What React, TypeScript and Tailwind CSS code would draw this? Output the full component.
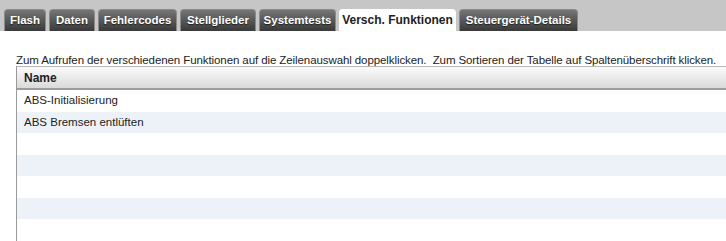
const tabs = [
  { label: 'Flash', w: 'w-[42px]' },
  { label: 'Daten', w: 'w-[46px]' },
  { label: 'Fehlercodes', w: 'w-[79px]' },
  { label: 'Stellglieder', w: 'w-[76px]' },
  { label: 'Systemtests', w: 'w-[77px]' },
  { label: 'Versch. Funktionen', w: 'w-[117px]', active: true },
  { label: 'Steuergerät-Details', w: 'w-[119px]' },
]

const rows = ['ABS-Initialisierung', 'ABS Bremsen entlüften', '', '', '', '', '']

export default function App() {
  return (
    <div className="w-[726px] h-[241px] overflow-hidden bg-white text-[#222] font-['Liberation_Sans',Arial,sans-serif]">
      {/* Tab bar */}
      <div className="h-[31px] bg-[#c6c6c6] flex items-end gap-[3px] pl-[4px]">
        {tabs.map((t) =>
          t.active ? (
            <div
              key={t.label}
              className={`${t.w} h-[22px] bg-white rounded-t-[4px] flex items-center justify-center text-[12px] font-bold text-[#222]`}
            >
              {t.label}
            </div>
          ) : (
            <div
              key={t.label}
              className={`${t.w} h-[22px] rounded-t-[4px] border-t border-x border-[#8a8a8a] bg-gradient-to-b from-[#767676] to-[#3a3a3a] flex items-center justify-center text-[11.5px] font-bold text-white [text-shadow:0_1px_1px_rgba(0,0,0,0.6)]`}
            >
              {t.label}
            </div>
          )
        )}
      </div>

      {/* Content */}
      <div className="pl-[16px] pt-[24px]">
        <p className="text-[11.5px] leading-[11px] h-[11px] tracking-[-0.09px] whitespace-nowrap">
          Zum Aufrufen der verschiedenen Funktionen auf die Zeilenauswahl doppelklicken.&nbsp; Zum Sortieren der Tabelle auf Spaltenüberschrift klicken.
        </p>
        <div className="border-l border-[#9a9a9a]">
          <div className="h-[24px] border-t border-[#b8b8b8] border-b-2 border-b-[#9c9c9c] bg-gradient-to-b from-[#fbfbfb] to-[#dadada] flex items-center pl-[7px] text-[12px] font-bold">
            Name
          </div>
          {rows.map((r, i) => (
            <div
              key={i}
              className={`h-[21.5px] flex items-center pl-[7px] text-[11.5px] ${i % 2 === 1 ? 'bg-[#edf2f9]' : 'bg-white'}`}
            >
              {r}
            </div>
          ))}
        </div>
      </div>
    </div>
  )
}
